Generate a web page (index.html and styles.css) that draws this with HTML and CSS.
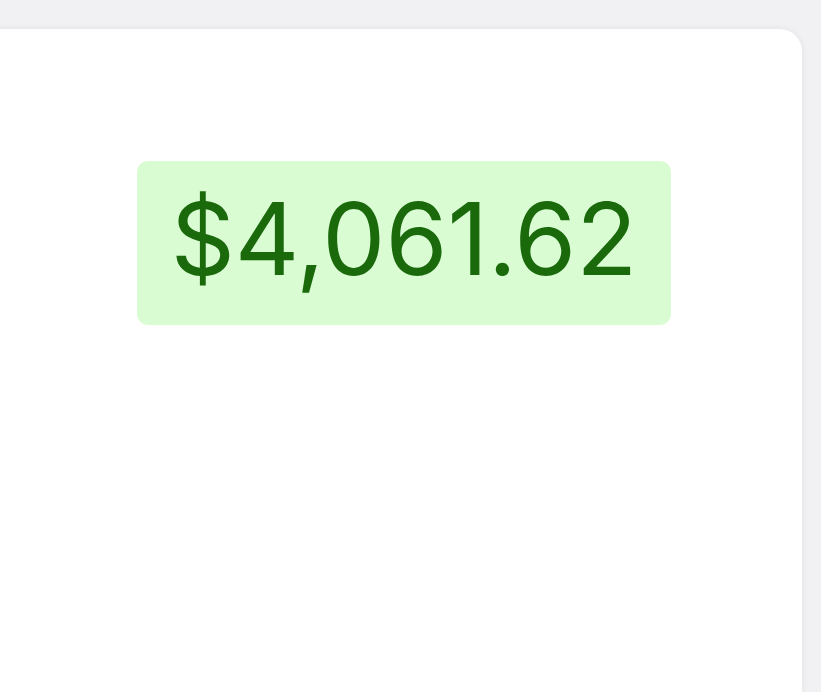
FILE: index.html
```html
<!DOCTYPE html>
<html lang="en">
<head>
  <meta charset="UTF-8" />
  <meta name="viewport" content="width=device-width, initial-scale=1.0"/>
  <title>Balance</title>
  <link rel="stylesheet" href="styles.css">
</head>
<body>
  <div class="card">
    <div class="balance">$4,061.62</div>
  </div>
</body>
</html>
```

FILE: styles.css
```css
html, body {
  height: 100%;
}
body {
  font-family: "Inter", "Liberation Sans", sans-serif;
  background-color: #f1f1f3;
  margin: 0;
  padding: 29px 0 0;
  box-sizing: border-box;
  overflow: hidden;
  display: flex;
}
.card {
  background: white;
  margin-left: -40px;
  width: 842px;
  padding: 132px 0 0 46px;
  box-sizing: border-box;
  border-radius: 22px 22px 0 0;
  box-shadow: 0 0 6px rgba(0, 0, 0, 0.07);
  display: flex;
  flex-direction: column;
  align-items: center;
}
.balance {
  background-color: #d9fcd3;
  color: #1a6a0c;
  font-size: 100px;
  line-height: 1;
  padding: 28px 34px 36px;
  border-radius: 11px;
}
```
